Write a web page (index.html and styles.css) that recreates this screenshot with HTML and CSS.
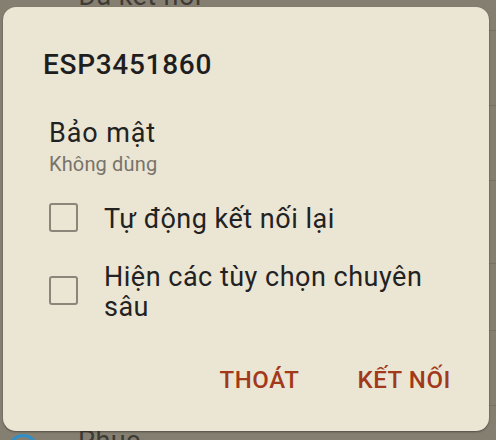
FILE: index.html
```html
<!DOCTYPE html>
<html lang="vi">
<head>
<meta charset="utf-8">
<link rel="stylesheet" href="styles.css">
</head>
<body>
<div class="backdrop">
  <div class="bg-text bg-top">Đã kết nối</div>
  <div class="bg-text bg-bottom">Phục</div>
  <div class="bg-ring"></div>
  <div class="bg-line" style="top:30px"></div>
  <div class="bg-line" style="top:105px"></div>
  <div class="bg-line" style="top:180px"></div>
  <div class="bg-line" style="top:263px"></div>
  <div class="bg-line" style="top:330px"></div>
  <div class="bg-line" style="top:405px"></div>
</div>
<div class="dialog">
  <h1 class="title">ESP3451860</h1>
  <div class="section">
    <div class="label">Bảo mật</div>
    <div class="sub">Không dùng</div>
  </div>
  <label class="row row-first">
    <span class="box"></span>
    <span class="row-text">Tự động kết nối lại</span>
  </label>
  <label class="row row-second">
    <span class="box"></span>
    <span class="row-text">Hiện các tùy chọn chuyên sâu</span>
  </label>
  <div class="actions">
    <span class="btn">THOÁT</span>
    <span class="btn">KẾT NỐI</span>
  </div>
</div>
</body>
</html>
```
FILE: styles.css
```css
html, body {
  margin: 0;
  padding: 0;
  overflow: hidden;
}
body {
  width: 496px;
  height: 440px;
  background: #857f72;
  font-family: Roboto, "Noto Sans", sans-serif;
  position: relative;
}
.backdrop {
  position: absolute;
  inset: 0;
  overflow: hidden;
}
.bg-text {
  position: absolute;
  left: 78px;
  color: #3e3b35;
  font-size: 27px;
  line-height: 30px;
  letter-spacing: 0.4px;
}
.bg-top { top: -19px; }
.bg-bottom { top: 426px; }
.bg-ring {
  position: absolute;
  left: 8px;
  top: 434px;
  width: 24px;
  height: 24px;
  border: 3px solid #2f8fc9;
  border-radius: 50%;
}
.bg-line {
  position: absolute;
  left: 489px;
  right: 0;
  height: 1px;
  background: #77725f;
}
.dialog {
  position: relative;
  margin: 7px 0 0 3px;
  width: 486px;
  height: 424px;
  box-sizing: border-box;
  background: #ebe5d4;
  border-radius: 13px;
  box-shadow: 0 1px 2px rgba(40, 36, 30, 0.55);
  padding: 41px 38px 0 40px;
  color: #222;
}
.title {
  margin: 0;
  font-size: 28px;
  line-height: 34px;
  font-weight: 500;
  letter-spacing: 0.7px;
  color: #1e1e1e;
}
.section {
  margin: 37px 0 0 6px;
}
.label {
  font-size: 27px;
  line-height: 30px;
  letter-spacing: 0.9px;
  margin-top: -1px;
}
.sub {
  margin-top: 5px;
  font-size: 20px;
  line-height: 22px;
  letter-spacing: 0.15px;
  color: #78736a;
}
.row {
  display: flex;
  align-items: center;
  margin-left: 6px;
}
.row-first { margin-top: 29px; }
.row-second { margin-top: 28px; }
.box {
  flex: none;
  width: 25px;
  height: 25px;
  border: 2px solid #8b867a;
  border-radius: 3px;
  margin-right: 26px;
  margin-top: -4px;
}
.row-text {
  font-size: 27px;
  line-height: 30px;
  letter-spacing: 0.5px;
  color: #222;
  max-width: 340px;
}
.actions {
  display: flex;
  justify-content: flex-end;
  gap: 58px;
  margin-top: 44px;
}
.btn {
  font-size: 24px;
  line-height: 28px;
  font-weight: 500;
  letter-spacing: 0.6px;
  color: #a1391a;
}
```
